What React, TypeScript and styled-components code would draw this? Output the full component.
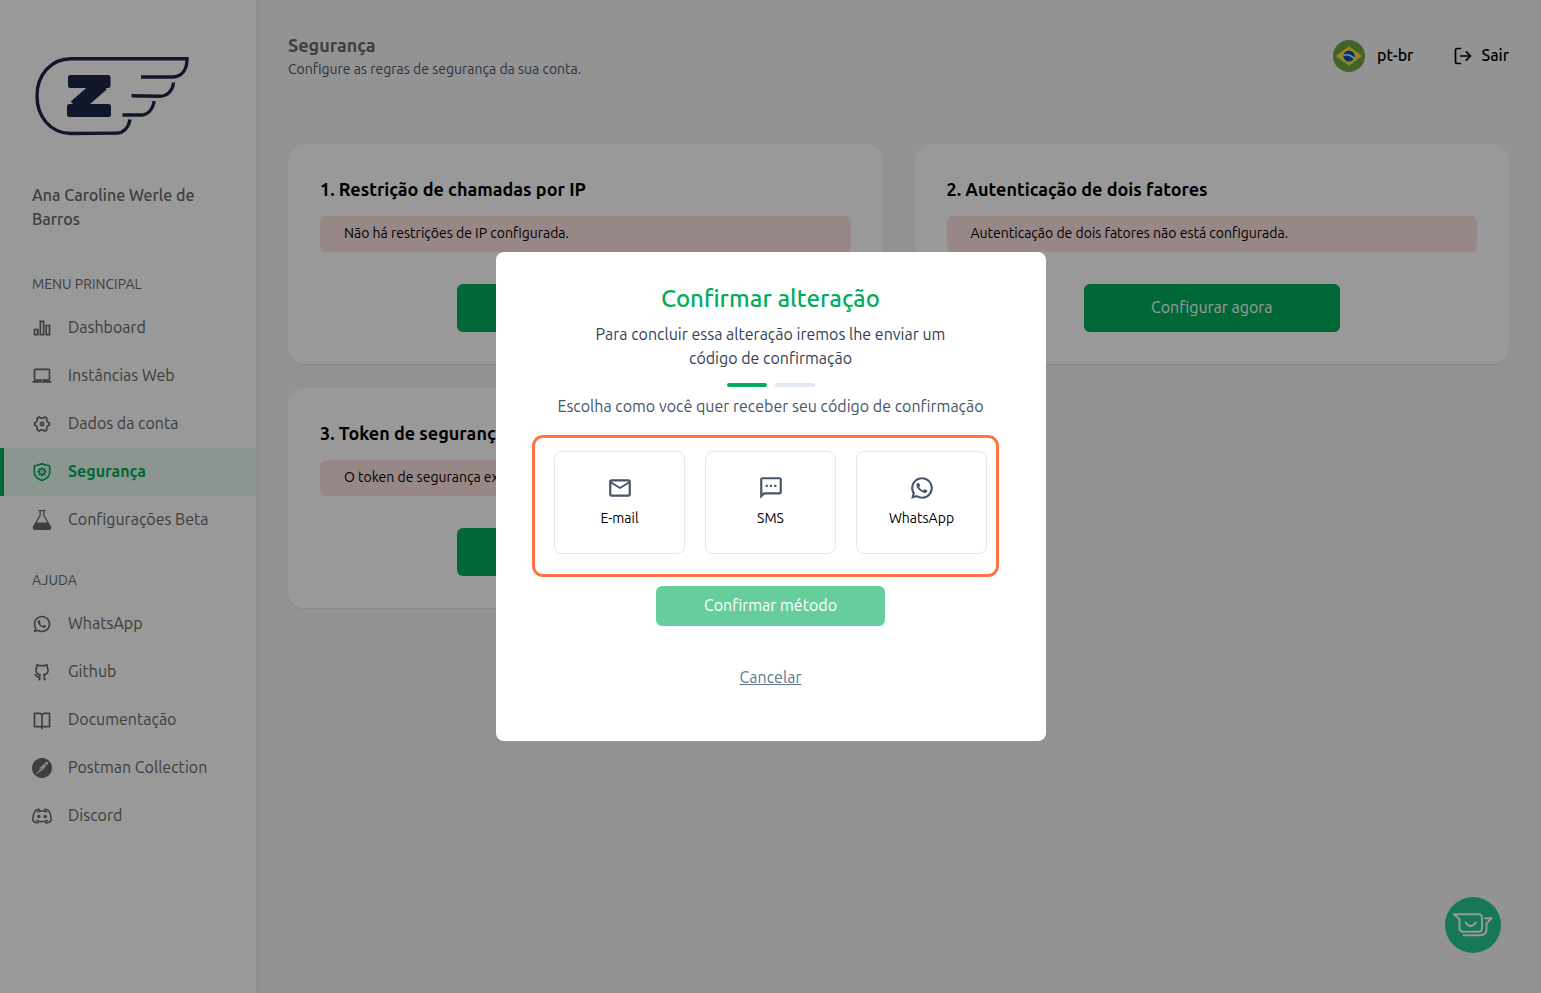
import React, { useState } from "react";
import styled, { createGlobalStyle } from "styled-components";
import {
  RiBarChart2Line,
  RiBookOpenLine,
  RiGithubLine,
  RiSettings3Line,
  RiWhatsappLine,
} from "react-icons/ri";
import { MdOutlineLaptopMac, MdOutlineMail, MdOutlineSms } from "react-icons/md";
import { ImLab } from "react-icons/im";
import { SiPostman } from "react-icons/si";
import { FiLogOut } from "react-icons/fi";

const color = {
  green: "#00ad5c",
  greenTint: "#e6fbef",
  navy: "#1e2648",
  gray: "#686868",
  slate: "#475569",
  slateDark: "#334155",
  line: "#e2e8f0",
};

const GlobalStyle = createGlobalStyle`
  *, *::before, *::after { box-sizing: border-box; }
  body {
    margin: 0;
    background: #f5f5f5;
    color: #000;
    font-family: Ubuntu, Roboto, "Open Sans", sans-serif;
    font-size: 16px;
    line-height: 24px;
  }
  h1, h2, h3, p, ul { margin: 0; padding: 0; }
  button { font: inherit; cursor: pointer; }
`;

const Page = styled.div`
  display: flex;
  min-height: 100vh;
`;

/* Sidebar */

const Sidebar = styled.aside`
  flex: none;
  width: 256px;
  padding: 48px 0 32px;
  background: #fff;
  box-shadow: 0 0 16px rgba(0, 0, 0, 0.08);
`;

const LogoLink = styled.a`
  display: block;
  height: 96px;
  margin: 0 32px 39px;
`;

const UserName = styled.p`
  margin: 0 32px 41px;
  color: ${color.gray};
  font-weight: 500;
`;

const NavSection = styled.nav`
  margin-bottom: 24px;
`;

const NavHeading = styled.h3`
  padding: 2px 32px 10px;
  color: ${color.gray};
  font-size: 14px;
  font-weight: 400;
  line-height: 20px;
  text-transform: uppercase;
`;

const NavList = styled.ul`
  list-style: none;
`;

const NavLink = styled.a<{ $active?: boolean }>`
  display: flex;
  align-items: center;
  gap: 16px;
  height: 48px;
  padding: 0 28px;
  border-left: 4px solid ${(p) => (p.$active ? color.green : "transparent")};
  background: ${(p) => (p.$active ? color.greenTint : "transparent")};
  color: ${(p) => (p.$active ? color.green : color.gray)};
  font-weight: ${(p) => (p.$active ? 700 : 400)};
  text-decoration: none;

  svg {
    flex: none;
    width: 20px;
    height: 20px;
  }
`;

const IconLabel = styled.span`
  padding-bottom: 2px;
`;

const GearIcon = styled(RiSettings3Line)`
  transform: rotate(90deg);
`;

/* Main column */

const Main = styled.main`
  flex: 1;
  min-width: 0;
  padding: 32px;
`;

const Header = styled.header`
  display: flex;
  justify-content: space-between;
  align-items: center;
  margin-bottom: 64px;
`;

const PageTitle = styled.h1`
  color: ${color.gray};
  font-size: 18px;
  font-weight: 600;
  line-height: 26px;
`;

const PageSubtitle = styled.p`
  color: ${color.slate};
  font-size: 14px;
  line-height: 22px;
`;

const HeaderActions = styled.div`
  display: flex;
  gap: 40px;
`;

const HeaderButton = styled.button<{ $gap: number }>`
  display: flex;
  align-items: center;
  gap: ${(p) => p.$gap}px;
  padding: 0;
  border: 0;
  background: none;
  color: #000;
  font-weight: 500;
`;

const CardGrid = styled.div`
  display: grid;
  grid-template-columns: repeat(2, minmax(0, 1fr));
  gap: 24px 32px;
`;

const Card = styled.section`
  display: flex;
  flex-direction: column;
  padding: 32px;
  border-radius: 16px;
  background: #fff;
  box-shadow: 0 1px 2px rgba(0, 0, 0, 0.08);
`;

const CardTitle = styled.h2`
  margin-bottom: 14px;
  font-size: 18px;
  font-weight: 600;
  line-height: 26px;
`;

const Notice = styled.p`
  margin-bottom: 32px;
  padding: 7px 24px 9px;
  border-radius: 6px;
  background: #fee2e2;
  font-size: 14px;
  line-height: 20px;
`;

const PrimaryButton = styled.button`
  align-self: center;
  width: 256px;
  height: 48px;
  padding: 0 8px 2px;
  border: 0;
  border-radius: 6px;
  background: ${color.green};
  color: #fff;
`;

const ChatButton = styled.button`
  position: fixed;
  right: 40px;
  bottom: 40px;
  width: 56px;
  height: 56px;
  padding: 0;
  border: 0;
  border-radius: 50%;
  background: #25c88e;
  color: #fff;
`;

/* Confirmation dialog */

const Backdrop = styled.div`
  position: fixed;
  inset: 0;
  display: flex;
  align-items: center;
  justify-content: center;
  background: rgba(0, 0, 0, 0.4);
`;

const Dialog = styled.div`
  display: flex;
  flex-direction: column;
  align-items: center;
  width: 550px;
  max-width: 100%;
  padding: 31px 32px 52px;
  border-radius: 8px;
  background: #fff;
  text-align: center;
`;

const DialogTitle = styled.h2`
  margin-bottom: 7px;
  color: ${color.green};
  font-size: 24px;
  font-weight: 500;
  line-height: 32px;
`;

const DialogText = styled.p`
  max-width: 384px;
  margin-bottom: 13px;
  color: ${color.slateDark};
`;

const Steps = styled.div`
  display: flex;
  gap: 8px;
  margin-bottom: 7px;
`;

const Step = styled.span<{ $done?: boolean }>`
  width: 40px;
  height: 4px;
  border-radius: 2px;
  background: ${(p) => (p.$done ? color.green : color.line)};
`;

const DialogPrompt = styled.p`
  margin-bottom: 33px;
  color: ${color.slate};
`;

const Methods = styled.div`
  position: relative;
  display: grid;
  grid-template-columns: repeat(3, 131px);
  gap: 20px;
  margin-bottom: 32px;

  &::after {
    content: "";
    position: absolute;
    inset: -16px -12px -23px -22px;
    border: 3px solid #ff7443;
    border-radius: 11px;
    pointer-events: none;
  }
`;

const MethodButton = styled.button`
  display: flex;
  flex-direction: column;
  align-items: center;
  gap: 7px;
  height: 103px;
  padding: 23px 8px;
  border: 1px solid ${color.line};
  border-radius: 8px;
  background: #fff;
  color: #000;
  font-size: 14px;
  line-height: 20px;

  svg {
    width: 26px;
    height: 26px;
    color: ${color.slate};
  }
`;

const ConfirmButton = styled.button`
  width: 229px;
  height: 40px;
  margin-bottom: 39px;
  padding: 0 8px 2px;
  border: 0;
  border-radius: 6px;
  background: #66ce9d;
  color: #fff;
`;

const CancelButton = styled.button`
  padding: 0;
  border: 0;
  background: none;
  color: #64748b;
  text-decoration: underline;
`;

/* Drawings */

const Logo = () => (
  <svg width="160" height="96" viewBox="12 8 160 96" fill="none" stroke={color.navy} strokeWidth="3.4" role="img" aria-label="Z-API">
    <path d="M110 79.5C108.500 87.500 103.500 93 96.500 93.100L51 93.500C30 93.500 17 76 17 56C17 35 31 18.700 51 18.700H167C167 29.500 162 37 152 37H121" />
    <path d="M153.500 42.500C153 50.500 147 56.200 140 56.200L111.500 55.800" />
    <path d="M134.200 61C132.500 70 127.500 75 121 75H102.500" />
    <g fill={color.navy} strokeWidth="0">
      <rect x="48" y="35" width="42.500" height="13" rx="2.500" />
      <rect x="47" y="64" width="44" height="13" rx="2.500" />
    </g>
    <line x1="82" y1="44" x2="55.500" y2="67" strokeWidth="14.500" />
  </svg>
);

const ShieldGear = () => (
  <svg viewBox="0 0 24 24" fill="none" stroke="currentColor" strokeWidth="2">
    <path d="M12 2.200L21.200 4.800V12.500C21.200 17 17 20.300 12 22.200C7 20.300 2.800 17 2.800 12.500V4.800Z" strokeLinejoin="round" />
    <circle cx="12" cy="11.800" r="3.400" strokeWidth="2" />
    <path d="M12 6.200V8.800M12 14.800V17.400M6.400 11.800H9M15 11.800H17.600M8 7.800L10 9.800M14 13.800L16 15.800M16 7.800L14 9.800M10 13.800L8 15.800" strokeWidth="1.800" />
    <circle cx="12" cy="11.800" r="0.900" fill="currentColor" stroke="none" />
  </svg>
);

const Discord = () => (
  <svg viewBox="0 0 24 24" fill="none" stroke="currentColor" strokeWidth="1.800" strokeLinecap="round" strokeLinejoin="round">
    <path d="M9.300 5.600L8.600 4C6.500 4.300 4.900 5 3.700 5.900C1.800 9.100 0.900 13 1 17.300C2.500 19.200 4.500 20.200 6.800 20.500L8 18.500" />
    <path d="M14.700 5.600L15.400 4C17.500 4.300 19.100 5 20.300 5.900C22.200 9.100 23.100 13 23 17.300C21.500 19.200 19.500 20.200 17.200 20.500L16 18.500" />
    <path d="M6.300 7C9.800 5.600 14.200 5.600 17.700 7M5.600 17.200C9.500 19.100 14.500 19.100 18.400 17.200" />
    <circle cx="8.200" cy="12.600" r="2.100" fill="currentColor" stroke="none" />
    <circle cx="15.800" cy="12.600" r="2.100" fill="currentColor" stroke="none" />
  </svg>
);

const BrazilFlag = () => (
  <svg width="32" height="32" viewBox="0 0 32 32" aria-hidden="true">
    <circle cx="16" cy="16" r="16" fill="#6da544" />
    <path d="M16 6.300L29.200 16L16 25.700L2.800 16Z" fill="#ffda44" />
    <circle cx="16" cy="16" r="5.600" fill="#0052b4" />
    <path d="M10.600 15.200C14.500 14.200 18.600 15.600 21 18.700" fill="none" stroke="#f0f0f0" strokeWidth="1.500" />
  </svg>
);

const ChatCup = () => (
  <svg width="56" height="56" viewBox="0 0 56 56" fill="none" stroke="currentColor" strokeWidth="2" strokeLinecap="round" strokeLinejoin="round">
    <path d="M8.800 17.300H33.500Q37 17.300 37 20.800V31Q37 34.800 33.500 34.800H18.500Q14.500 34.800 14.500 31V22Z" />
    <path d="M40 21.200H46.500L41.500 26.500V32Q41.500 38.200 35.500 38.200H18.500" />
    <path d="M20.500 25.500Q25.500 32.500 31 25.500" />
  </svg>
);

/* Content */

const sections = [
  {
    title: "Menu principal",
    items: [
      { label: "Dashboard", Icon: RiBarChart2Line },
      { label: "Instâncias Web", Icon: MdOutlineLaptopMac },
      { label: "Dados da conta", Icon: GearIcon },
      { label: "Segurança", Icon: ShieldGear, active: true },
      { label: "Configurações Beta", Icon: ImLab },
    ],
  },
  {
    title: "Ajuda",
    items: [
      { label: "WhatsApp", Icon: RiWhatsappLine },
      { label: "Github", Icon: RiGithubLine },
      { label: "Documentação", Icon: RiBookOpenLine },
      { label: "Postman Collection", Icon: SiPostman },
      { label: "Discord", Icon: Discord },
    ],
  },
];

const cards = [
  { title: "1. Restrição de chamadas por IP", notice: "Não há restrições de IP configurada." },
  { title: "2. Autenticação de dois fatores", notice: "Autenticação de dois fatores não está configurada." },
  { title: "3. Token de segurança da conta", notice: "O token de segurança expirou." },
];

const methods = [
  { label: "E-mail", Icon: MdOutlineMail },
  { label: "SMS", Icon: MdOutlineSms },
  { label: "WhatsApp", Icon: RiWhatsappLine },
];

export default function App() {
  const [method, setMethod] = useState<string | null>(null);

  return (
    <>
      <GlobalStyle />
      <Page>
        <Sidebar>
          <LogoLink href="#">
            <Logo />
          </LogoLink>
          <UserName>Ana Caroline Werle de Barros</UserName>
          {sections.map((section) => (
            <NavSection key={section.title} aria-label={section.title}>
              <NavHeading>{section.title}</NavHeading>
              <NavList>
                {section.items.map(({ label, Icon, ...item }) => (
                  <li key={label}>
                    <NavLink href="#" $active={"active" in item}>
                      <Icon />
                      <IconLabel>{label}</IconLabel>
                    </NavLink>
                  </li>
                ))}
              </NavList>
            </NavSection>
          ))}
        </Sidebar>

        <Main>
          <Header>
            <div>
              <PageTitle>Segurança</PageTitle>
              <PageSubtitle>Configure as regras de segurança da sua conta.</PageSubtitle>
            </div>
            <HeaderActions>
              <HeaderButton $gap={12}>
                <BrazilFlag />
                <IconLabel>pt-br</IconLabel>
              </HeaderButton>
              <HeaderButton $gap={8}>
                <FiLogOut size={20} />
                <IconLabel>Sair</IconLabel>
              </HeaderButton>
            </HeaderActions>
          </Header>
          <CardGrid>
            {cards.map((card) => (
              <Card key={card.title}>
                <CardTitle>{card.title}</CardTitle>
                <Notice>{card.notice}</Notice>
                <PrimaryButton>Configurar agora</PrimaryButton>
              </Card>
            ))}
          </CardGrid>
        </Main>
      </Page>

      <ChatButton aria-label="Chat">
        <ChatCup />
      </ChatButton>

      <Backdrop>
        <Dialog role="dialog" aria-modal="true" aria-labelledby="dialog-title">
          <DialogTitle id="dialog-title">Confirmar alteração</DialogTitle>
          <DialogText>Para concluir essa alteração iremos lhe enviar um código de confirmação</DialogText>
          <Steps>
            <Step $done />
            <Step />
          </Steps>
          <DialogPrompt>Escolha como você quer receber seu código de confirmação</DialogPrompt>
          <Methods>
            {methods.map(({ label, Icon }) => (
              <MethodButton key={label} aria-pressed={method === label} onClick={() => setMethod(label)}>
                <Icon />
                {label}
              </MethodButton>
            ))}
          </Methods>
          <ConfirmButton>Confirmar método</ConfirmButton>
          <CancelButton>Cancelar</CancelButton>
        </Dialog>
      </Backdrop>
    </>
  );
}
